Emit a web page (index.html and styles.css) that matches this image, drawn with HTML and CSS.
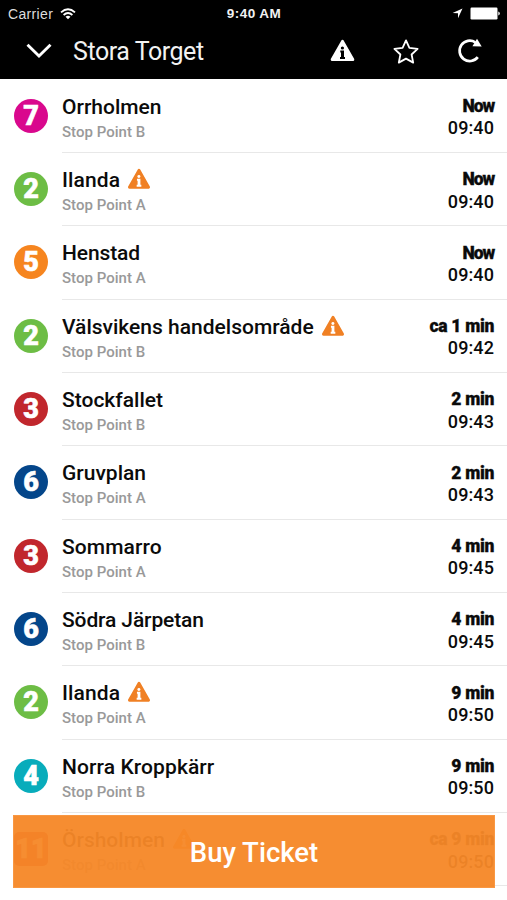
FILE: index.html
```html
<!DOCTYPE html>
<html lang="en">
<head>
<meta charset="utf-8">
<title>Stora Torget</title>
<link rel="stylesheet" href="styles.css">
</head>
<body>
<svg class="defs" width="0" height="0" aria-hidden="true">
<symbol id="alert" viewBox="0 0 25 23"><path fill="currentColor" stroke="currentColor" stroke-width="3" stroke-linejoin="round" d="M12.5 2.4 22.8 20.6H2.2z"/><circle class="mark" cx="12.4" cy="9" r="1.6"/><path class="mark" d="M10.3 11.6h3.7v6.4h1V20h-5v-2h1v-4.4h-.7z"/></symbol>
</svg>
<div class="screen">
<header>
<div class="status">
<div class="carrier"><span>Carrier</span><svg width="16" height="12" viewBox="0 0 16 12"><g fill="none" stroke="#fff" stroke-width="1.8"><path d="M1 4.4Q8-2 15 4.4M3.6 7Q8 3 12.4 7"/></g><path fill="#fff" d="M5.5 8.7Q8 6.8 10.5 8.7L8 11.3z"/></svg></div>
<span class="clock">9:40 AM</span>
<div class="power"><svg width="11" height="11" viewBox="0 0 11 11"><path fill="#fff" d="M10.5.5 6 10.3V5.2L.6 4.9z"/></svg><svg width="30" height="13" viewBox="0 0 30 13"><rect width="27" height="12" x=".5" y=".5" rx="1.2" fill="#fff"/><path fill="#fff" d="M28.3 4.5q1.5.3 1.5 2t-1.5 2z"/></svg></div>
</div>
<div class="nav">
<svg class="back" width="26" height="16" viewBox="0 0 26 16"><path d="M1.5 1.8 13 13 24.5 1.8" fill="none" stroke="#fff" stroke-width="2.9"/></svg>
<h1>Stora Torget</h1>
<svg class="warn" width="25" height="23"><use href="#alert"/></svg>
<svg class="star" width="26" height="25" viewBox="0 0 26 25"><path d="m13 1.4 3.4 7.5 8.2 1-6 5.6 1.6 8.1-7.2-4-7.2 4 1.6-8.1-6-5.6 8.2-1z" fill="none" stroke="#fff" stroke-width="1.8" stroke-linejoin="round"/></svg>
<svg class="reload" width="25" height="25" viewBox="0 0 25 25"><path d="M18.3 4.3A10.2 10.2 0 1 0 20.8 19.2" fill="none" stroke="#fff" stroke-width="2.7"/><path fill="#fff" d="M20 .8 24.7 8.6 15.4 8.2z"/></svg>
</div>
</header>
<main>
<div class="row"><b class="line magenta">7</b><div class="info"><div class="stop"><div class="name"><span>Orrholmen</span></div><div class="point">Stop Point B</div></div><div class="when"><b class="now">Now</b><span>09:40</span></div></div></div>
<div class="row"><b class="line green">2</b><div class="info"><div class="stop"><div class="name"><span class="wide">Ilanda</span><svg><use href="#alert"/></svg></div><div class="point">Stop Point A</div></div><div class="when"><b class="now">Now</b><span>09:40</span></div></div></div>
<div class="row"><b class="line orange">5</b><div class="info"><div class="stop"><div class="name"><span class="tight">Henstad</span></div><div class="point">Stop Point A</div></div><div class="when"><b class="now">Now</b><span>09:40</span></div></div></div>
<div class="row"><b class="line green">2</b><div class="info"><div class="stop"><div class="name"><span>Välsvikens handelsområde</span><svg><use href="#alert"/></svg></div><div class="point">Stop Point B</div></div><div class="when"><b>ca 1 min</b><span>09:42</span></div></div></div>
<div class="row"><b class="line red">3</b><div class="info"><div class="stop"><div class="name"><span>Stockfallet</span></div><div class="point">Stop Point B</div></div><div class="when"><b>2 min</b><span>09:43</span></div></div></div>
<div class="row"><b class="line blue">6</b><div class="info"><div class="stop"><div class="name"><span>Gruvplan</span></div><div class="point">Stop Point A</div></div><div class="when"><b>2 min</b><span>09:43</span></div></div></div>
<div class="row"><b class="line red">3</b><div class="info"><div class="stop"><div class="name"><span class="wide">Sommarro</span></div><div class="point">Stop Point A</div></div><div class="when"><b>4 min</b><span>09:45</span></div></div></div>
<div class="row"><b class="line blue">6</b><div class="info"><div class="stop"><div class="name"><span class="tight">Södra Järpetan</span></div><div class="point">Stop Point B</div></div><div class="when"><b>4 min</b><span>09:45</span></div></div></div>
<div class="row"><b class="line green">2</b><div class="info"><div class="stop"><div class="name"><span class="wide">Ilanda</span><svg><use href="#alert"/></svg></div><div class="point">Stop Point A</div></div><div class="when"><b>9 min</b><span>09:50</span></div></div></div>
<div class="row"><b class="line teal">4</b><div class="info"><div class="stop"><div class="name"><span class="wide">Norra Kroppkärr</span></div><div class="point">Stop Point B</div></div><div class="when"><b>9 min</b><span>09:50</span></div></div></div>
<div class="row"><b class="line square">11</b><div class="info"><div class="stop"><div class="name"><span>Örsholmen</span><svg><use href="#alert"/></svg></div><div class="point">Stop Point A</div></div><div class="when"><b>ca 9 min</b><span>09:50</span></div></div></div>
</main>
<button class="buy">Buy Ticket</button>
</div>
</body>
</html>
```
FILE: styles.css
```css
* { box-sizing: border-box; }
body { margin: 0; background: #fff; color: #0b0b0b; font-family: Roboto, "Liberation Sans", sans-serif; }
svg { display: block; flex: none; }
.defs { position: absolute; }
.screen { position: relative; width: 507px; height: 900px; overflow: hidden; }
header { height: 79px; background: #000; color: #f2f2f2; }
.status { height: 27px; display: grid; grid-template-columns: 1fr auto 1fr; align-items: center; padding: 0 7px 0 8px; font: 14px/26px "Liberation Sans", sans-serif; }
.carrier { display: flex; align-items: center; gap: 7px; letter-spacing: .35px; color: #ddd; }
.clock { font-weight: 700; font-size: 13.5px; letter-spacing: .45px; padding-top: 1px; }
.power { display: flex; align-items: center; justify-content: flex-end; gap: 7px; }
.nav { height: 49px; display: flex; align-items: center; padding-left: 26px; }
.back { margin-top: -2px; }
h1 { margin: 0 0 0 21px; width: 257px; font-size: 25px; line-height: 30px; font-weight: 400; letter-spacing: -.45px; }
.warn { color: #fff; margin-top: -2px; }
.star { margin: -1px 0 0 38px; }
.reload { margin: -2px 0 0 38px; }
.mark { fill: var(--mark, #000); }
main { --pitch: 73.33px; }
.row { height: var(--pitch); display: flex; padding-left: 14px; }
.line { width: 34px; height: 34px; margin: 19.8px 14px 0 0; flex: none; border-radius: 50%; color: #fff; text-align: center; font-size: 27px; line-height: 34px; font-weight: 900; -webkit-text-stroke: .6px #fff; }
.magenta { background: #d9088d; }
.green { background: #6dbd45; }
.orange { background: #f6851f; }
.red { background: #c1272d; }
.blue { background: #04468a; }
.teal { background: #08acbb; }
.square { background: #c1272d; border-radius: 5px; }
.info { flex: 1; height: 74px; display: flex; justify-content: space-between; border-bottom: 1px solid #e8e8e8; padding: 14.8px 13px 0 0; }
.name { display: flex; height: 27px; line-height: 27px; font-size: 21px; font-weight: 500; gap: 7px; white-space: nowrap; }
.name svg { width: 24px; height: 21.5px; margin-top: 1px; color: #f08024; --mark: #fff; }
.wide { letter-spacing: .1px; }
.tight { letter-spacing: -.12px; }
.point { color: #999; font-size: 15px; line-height: 18px; margin-top: 1.9px; font-weight: 500; letter-spacing: .02px; }
.when { display: flex; flex-direction: column; text-align: right; font-size: 18px; line-height: 21.3px; padding-top: 2.2px; white-space: nowrap; }
.when b { font-weight: 900; font-size: 17.5px; letter-spacing: -.3px; -webkit-text-stroke: .3px; }
.when .now { letter-spacing: -1.1px; }
.when span { font-weight: 500; letter-spacing: .1px; }
.buy { position: absolute; left: 13px; top: 814.5px; width: 482px; height: 73px; border: 1px solid #f99742; background: rgba(246, 136, 40, .955); color: #fff; font: 500 27.5px/70px Roboto, sans-serif; padding: 2px 0 0; }
```
